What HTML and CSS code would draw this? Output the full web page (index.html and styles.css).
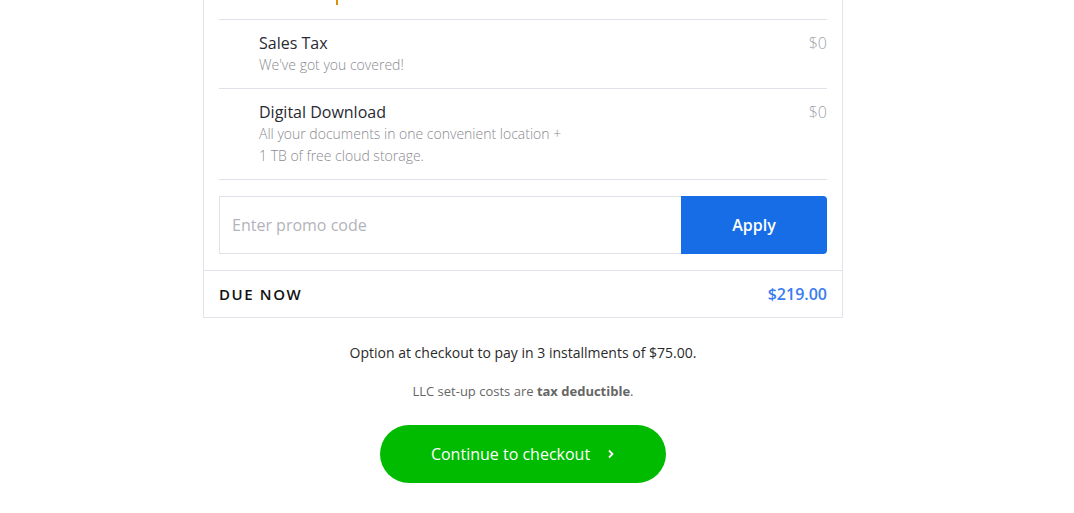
FILE: index.html
```html
<!DOCTYPE html>
<html>
<head>
<meta charset="utf-8">
<link rel="stylesheet" href="styles.css">
</head>
<body>
<div class="page">
  <div class="card">
    <div class="items">
      <div class="row row-top"><span class="mark"></span></div>
      <div class="row">
        <div class="info">
          <div class="title">Sales Tax</div>
          <div class="desc">We've got you covered!</div>
        </div>
        <div class="price">$0</div>
      </div>
      <div class="row">
        <div class="info">
          <div class="title">Digital Download</div>
          <div class="desc">All your documents in one convenient location +<br>1 TB of free cloud storage.</div>
        </div>
        <div class="price">$0</div>
      </div>
      <form class="promo">
        <input class="promo-input" type="text" placeholder="Enter promo code">
        <button class="promo-btn" type="button">Apply</button>
      </form>
    </div>
    <div class="due">
      <span class="due-label">DUE NOW</span>
      <span class="due-amount">$219.00</span>
    </div>
  </div>
  <p class="installments">Option at checkout to pay in 3 installments of $75.00.</p>
  <p class="deduct">LLC set-up costs are <b>tax deductible</b>.</p>
  <button class="checkout" type="button">Continue to checkout
    <svg class="chev" width="8" height="10" viewBox="0 0 8 10"><path d="M2 1.5 L5.5 5 L2 8.5" fill="none" stroke="#fff" stroke-width="1.8"/></svg>
  </button>
</div>
</body>
</html>
```
FILE: styles.css
```css
* { box-sizing: border-box; }
html, body { margin: 0; padding: 0; background: #fff; }
body { font-family: "Open Sans", "Liberation Sans", sans-serif; color: #222; }
.page { width: 1046px; display: flex; flex-direction: column; align-items: center; }
.card { width: 640px; border: 1px solid #e3e3ec; border-top: none; }
.items { padding: 0 15px; }
.row { display: flex; justify-content: space-between; align-items: flex-start; padding: 12px 0 12px 40px; border-bottom: 1px solid #e1e1ea; }
.row-top { height: 20px; padding: 0; position: relative; }
.mark { position: absolute; left: 117px; top: 0; width: 2px; height: 5px; background: #d9900a; }
.title { font-size: 16px; line-height: 22px; color: #2a2a33; font-weight: 400; }
.desc { font-size: 14px; line-height: 22px; color: #8a8a90; font-weight: 300; }
.price { font-size: 16px; line-height: 22px; color: #a0a0a8; font-weight: 300; }
.promo { display: flex; margin: 16px 0; height: 58px; }
.promo-input { flex: 1; min-width: 0; border: 1px solid #e1e1ea; border-right: none; padding: 0 12px; font-family: inherit; font-size: 16px; color: #333; outline: none; }
.promo-input::placeholder { color: #b3b3bb; font-weight: 400; }
.promo-btn { width: 146px; border: none; background: #166de6; color: #fff; font-family: inherit; font-size: 16px; font-weight: 600; border-radius: 0 4px 4px 0; }
.due { display: flex; justify-content: space-between; align-items: center; height: 47px; padding: 0 15px 1px; border-top: 1px solid #e1e1ea; }
.due-label { font-size: 15px; font-weight: 600; letter-spacing: 1.6px; color: #111; }
.due-amount { font-size: 16px; font-weight: 600; color: #3b7cf0; }
.installments { margin: 25px 0 0; font-size: 14px; line-height: 20px; color: #2a2a2a; }
.deduct { margin: 18px 0 0; font-size: 13px; line-height: 20px; color: #666; }
.deduct b { font-weight: 700; color: #666; }
.checkout { margin-top: 24px; width: 286px; height: 58px; border: none; border-radius: 29px; background: #00bb00; color: #fff; font-family: inherit; font-size: 16px; display: flex; align-items: center; justify-content: center; gap: 17px; padding: 0; }
.chev { display: block; }
```
